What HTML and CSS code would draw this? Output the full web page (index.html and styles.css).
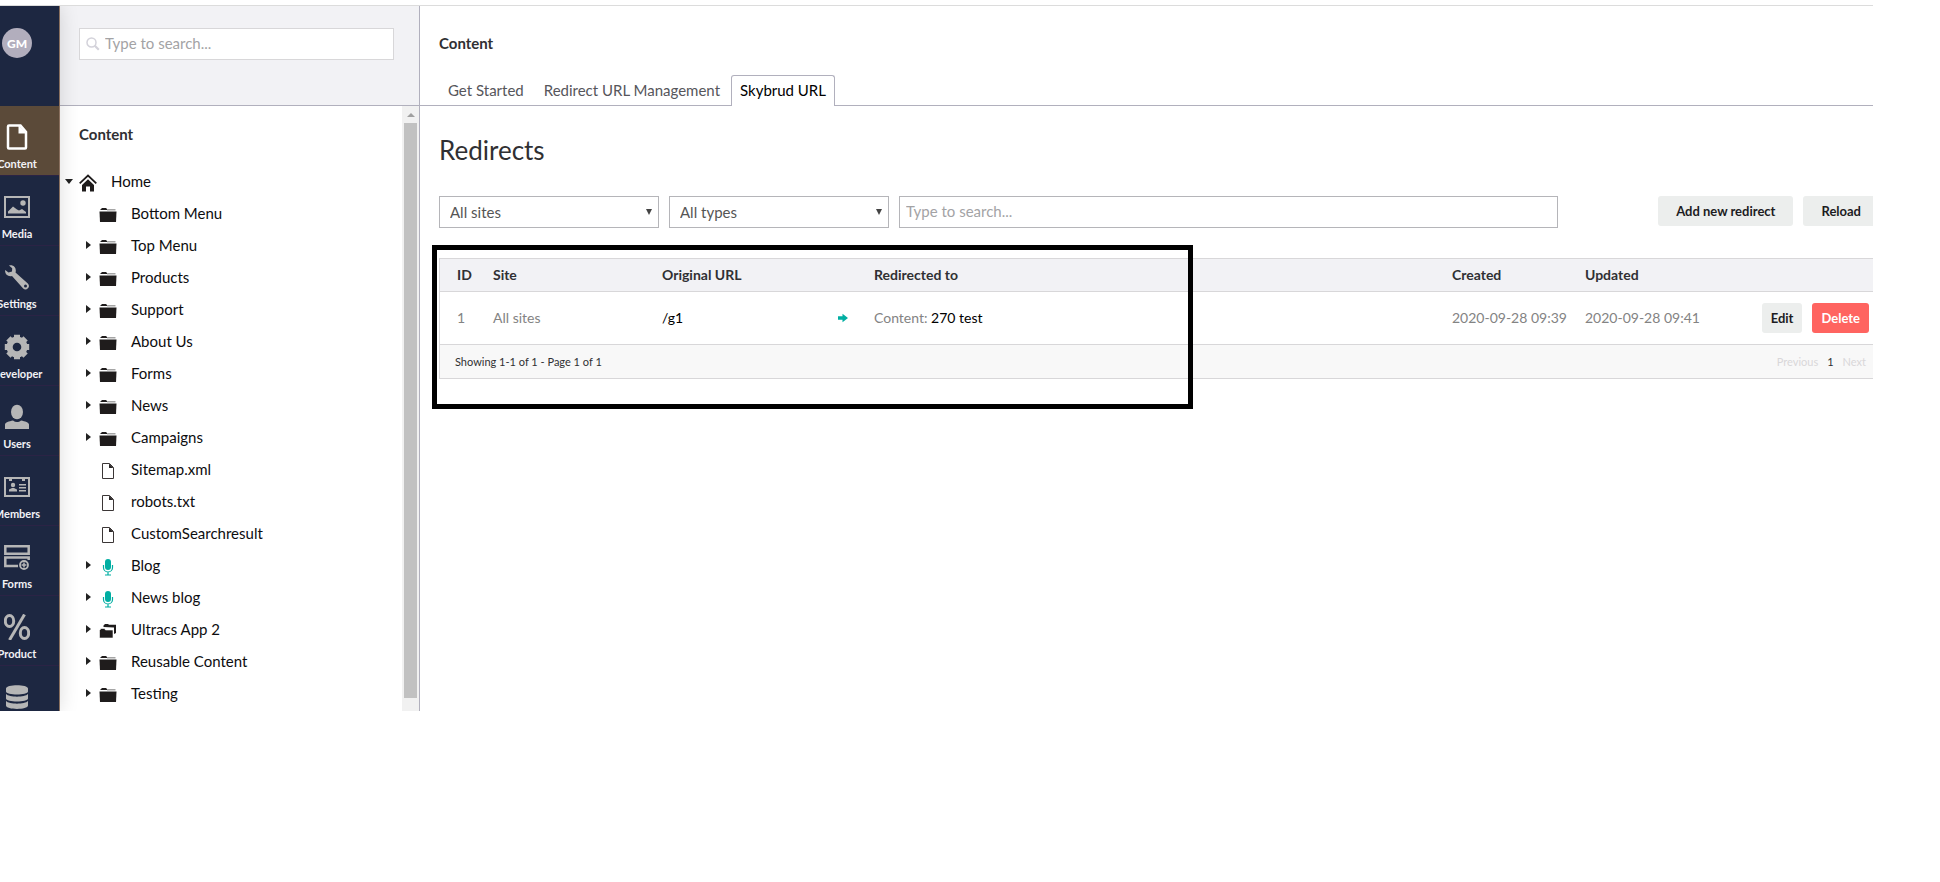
FILE: index.html
```html
<!DOCTYPE html>
<html lang="en">
  <head>
    <meta charset="UTF-8" />
    <meta name="viewport" content="width=device-width, initial-scale=1.0" />
    <title>Content - Skybrud URL</title>
    <link rel="stylesheet" href="styles.css">
  </head>
  <body>
    <!-- Icon sprite -->
    <svg class="sprite" aria-hidden="true">
      <symbol id="i-folder" viewBox="0 0 18 18">
        <path d="M1.5 4V3h1V2h5v1h1v1z" fill="#1f1c1c" />
        <path d="M8 3h8.500v1.500H8z" fill="#a5a5a5" />
        <path d="M.5 5.500h17L17 16H1z" fill="#1f1c1c" />
      </symbol>
      <symbol id="i-folders" viewBox="0 0 18 18">
        <path d="M4.500 5V3.500L6 2h3l1 .8h7V11l-2 1V5.500z" fill="#1f1c1c" />
        <path d="M.5 16V8.500L2 6.500h3.500l1 1.500H14v8z" fill="#1f1c1c" stroke="#fff" stroke-width=".6" />
      </symbol>
      <symbol id="i-doc" viewBox="0 0 18 18">
        <path d="M3.500 1.500h7l4 4v11h-11z" fill="#fff" stroke="#3b3636" />
        <path d="M10 1.500l4.500 4.500H10z" fill="#2a2626" />
      </symbol>
      <symbol id="i-mic" viewBox="0 0 18 18">
        <rect x="6" y="1" width="6" height="11" rx="3" fill="#00aea2" />
        <path d="M4.500 7v2.500a4.500 4.500 0 0 0 9 0V7M9 14v3M6 17h6" fill="none" stroke="#00aea2" stroke-width="1.200" />
      </symbol>
      <symbol id="i-home" viewBox="0 0 18 18">
        <path d="M.7 9.300L9 1.500l8.300 7.800" fill="none" stroke="#1f1c1c" stroke-width="1.800" />
        <path d="M3 11l6-5.800 6 5.800v6.500h-4V12.500H7v5H3z" fill="#1f1c1c" />
      </symbol>
    </svg>

    <div class="app">
      <!-- Sections -->
      <nav class="rail">
        <div class="rail-inner">
          <div class="user"><button class="avatar" type="button">GM</button></div>
          <a class="section active" href="#">
            <svg viewBox="0 0 26 26"><path d="M5 1.500h11.500L22 8v15.500a1 1 0 0 1-1 1H5a1 1 0 0 1-1-1v-21a1 1 0 0 1 1-1z" fill="none" stroke="currentColor" stroke-width="2.500" /><path d="M14.500 1v8.500H23z" fill="currentColor" /></svg>
            <span>Content</span>
          </a>
          <a class="section" href="#">
            <svg viewBox="0 0 26 26"><rect x="1" y="3" width="24" height="20" fill="none" stroke="currentColor" stroke-width="2" /><circle cx="19" cy="9" r="2.700" fill="currentColor" /><path d="M4 19.500v-2l5-5 4 3 2 1 3-1.500 4 3v1.500z" fill="currentColor" /></svg>
            <span>Media</span>
          </a>
          <a class="section" href="#">
            <svg viewBox="0 0 26 26"><path d="M5 1.500c4-1.500 8 2 6.500 7L23.800 19.500a3.400 3.400 0 0 1-4.600 5L8 12C4 13 .5 10 1.200 6l3.300 2.500L8 7.500l.2-3.300z" fill="currentColor" /><circle cx="21.500" cy="22" r="1.500" fill="#1d2741" /></svg>
            <span>Settings</span>
          </a>
          <a class="section" href="#">
            <svg viewBox="0 0 26 26"><circle cx="13" cy="13" r="7.500" fill="none" stroke="currentColor" stroke-width="6" /><path d="M13 .8v24.400M.8 13h24.400M4.400 4.400l17.200 17.200M21.600 4.400L4.400 21.600" fill="none" stroke="currentColor" stroke-width="6" stroke-linecap="butt" /><circle cx="13" cy="13" r="4.300" fill="#1d2741" /></svg>
            <span>Developer</span>
          </a>
          <a class="section" href="#">
            <svg viewBox="0 0 26 26"><ellipse cx="13" cy="8" rx="6" ry="7.300" fill="currentColor" /><path d="M1 25v-4.500c0-2 4-3.200 8-4 2.500 2 5.500 2 8 0 4 .8 8 2 8 4V25z" fill="currentColor" /></svg>
            <span>Users</span>
          </a>
          <a class="section" href="#">
            <svg viewBox="0 0 26 26"><path d="M1 4h24v18H1z" fill="none" stroke="currentColor" stroke-width="2" /><path d="M5 3h3v4H5zM18 3h3v4h-3z" fill="currentColor" /><circle cx="9" cy="11" r="2.200" fill="currentColor" /><path d="M5 17.500v-2l3-1.500h2l3 1.500v2zM15 10h7v1.500h-7zM15 13h7v1.500h-7zM15 16h7v1.500h-7z" fill="currentColor" /></svg>
            <span>Members</span>
          </a>
          <a class="section" href="#">
            <svg viewBox="0 0 26 26"><path d="M1.300 2.300h23.400v7.400H1.300zM14 22H1.300v-8.500h23.400V16" fill="none" stroke="currentColor" stroke-width="2.500" /><circle cx="20" cy="21" r="4" fill="none" stroke="currentColor" stroke-width="1.800" /><path d="M20 18.500v5M17.500 21h5" stroke="currentColor" stroke-width="1.500" /></svg>
            <span>Forms</span>
          </a>
          <a class="section" href="#">
            <svg viewBox="0 0 26 26"><path d="M20.500 .5L5.500 26" stroke="currentColor" stroke-width="3" /><ellipse cx="5.500" cy="7" rx="4.200" ry="5.500" fill="none" stroke="currentColor" stroke-width="3" /><ellipse cx="20.500" cy="19" rx="4.200" ry="5.500" fill="none" stroke="currentColor" stroke-width="3" /></svg>
            <span>Product</span>
          </a>
          <a class="section" href="#">
            <svg viewBox="0 0 26 26"><path d="M2 4.500C2 0 24 0 24 4.500v3c0 4-22 4-22 0zM2 10c3 3.500 19 3.500 22 0v4.500c0 4-22 4-22 0zM2 17c3 3.500 19 3.500 22 0v4.500c0 4.500-22 4.500-22 0z" fill="currentColor" /></svg>
          </a>
        </div>
      </nav>

      <!-- Content tree -->
      <aside class="tree-panel">
        <div class="tree-header">
          <div class="search">
            <svg viewBox="0 0 14 14"><circle cx="5.500" cy="5.500" r="4.500" fill="none" stroke="#d3d2da" stroke-width="1.500" /><path d="M8.800 8.800l4 4" stroke="#d3d2da" stroke-width="2.200" /></svg>
            <input type="text" aria-label="Search content" placeholder="Type to search..." />
          </div>
        </div>
        <div class="tree-body">
          <div class="tree-scroll">
            <h2 class="tree-title">Content</h2>
            <ul class="tree">
              <li class="root"><i class="caret down"></i><svg class="icon"><use href="#i-home" /></svg><a href="#">Home</a></li>
              <li><i class="caret none"></i><svg class="icon"><use href="#i-folder" /></svg><a href="#">Bottom Menu</a></li>
              <li><i class="caret"></i><svg class="icon"><use href="#i-folder" /></svg><a href="#">Top Menu</a></li>
              <li><i class="caret"></i><svg class="icon"><use href="#i-folder" /></svg><a href="#">Products</a></li>
              <li><i class="caret"></i><svg class="icon"><use href="#i-folder" /></svg><a href="#">Support</a></li>
              <li><i class="caret"></i><svg class="icon"><use href="#i-folder" /></svg><a href="#">About Us</a></li>
              <li><i class="caret"></i><svg class="icon"><use href="#i-folder" /></svg><a href="#">Forms</a></li>
              <li><i class="caret"></i><svg class="icon"><use href="#i-folder" /></svg><a href="#">News</a></li>
              <li><i class="caret"></i><svg class="icon"><use href="#i-folder" /></svg><a href="#">Campaigns</a></li>
              <li><i class="caret none"></i><svg class="icon"><use href="#i-doc" /></svg><a href="#">Sitemap.xml</a></li>
              <li><i class="caret none"></i><svg class="icon"><use href="#i-doc" /></svg><a href="#">robots.txt</a></li>
              <li><i class="caret none"></i><svg class="icon"><use href="#i-doc" /></svg><a href="#">CustomSearchresult</a></li>
              <li><i class="caret"></i><svg class="icon"><use href="#i-mic" /></svg><a href="#">Blog</a></li>
              <li><i class="caret"></i><svg class="icon"><use href="#i-mic" /></svg><a href="#">News blog</a></li>
              <li><i class="caret"></i><svg class="icon"><use href="#i-folders" /></svg><a href="#">Ultracs App 2</a></li>
              <li><i class="caret"></i><svg class="icon"><use href="#i-folder" /></svg><a href="#">Reusable Content</a></li>
              <li><i class="caret"></i><svg class="icon"><use href="#i-folder" /></svg><a href="#">Testing</a></li>
            </ul>
          </div>
          <div class="scrollbar">
            <div class="scroll-up"></div>
            <div class="scroll-thumb"></div>
          </div>
        </div>
      </aside>

      <!-- Dashboard -->
      <main class="main">
        <header class="main-header">
          <h1 class="main-title">Content</h1>
          <nav class="tabs">
            <a class="tab" href="#">Get Started</a>
            <a class="tab" href="#">Redirect URL Management</a>
            <a class="tab active" href="#">Skybrud URL</a>
          </nav>
        </header>
        <div class="dashboard">
          <h2 class="heading">Redirects</h2>
          <div class="toolbar">
            <select class="field" aria-label="Site"><option>All sites</option></select>
            <select class="field" aria-label="Type"><option>All types</option></select>
            <input class="field query" type="text" aria-label="Search redirects" placeholder="Type to search..." />
            <div class="actions">
              <button class="btn wide" type="button">Add new redirect</button>
              <button class="btn wide" type="button">Reload</button>
            </div>
          </div>

          <div class="redirects">
            <table class="table">
              <thead>
                <tr>
                  <th class="col-id">ID</th>
                  <th class="col-site">Site</th>
                  <th class="col-url">Original URL</th>
                  <th class="col-arrow"></th>
                  <th>Redirected to</th>
                  <th class="col-created">Created</th>
                  <th class="col-updated">Updated</th>
                  <th class="col-actions"></th>
                </tr>
              </thead>
              <tbody>
                <tr>
                  <td>1</td>
                  <td>All sites</td>
                  <td><a href="#">/g1</a></td>
                  <td><svg class="arrow" viewBox="0 0 10 10"><path d="M0 3.200h4.500V.8L10 5 4.500 9.200V6.800H0z" fill="#00aea2" /></svg></td>
                  <td>Content: <a href="#">270 test</a></td>
                  <td>2020-09-28 09:39</td>
                  <td>2020-09-28 09:41</td>
                  <td>
                    <div class="row-actions">
                      <button class="btn" type="button">Edit</button>
                      <button class="btn danger" type="button">Delete</button>
                    </div>
                  </td>
                </tr>
              </tbody>
            </table>
            <div class="table-footer">
              <span>Showing 1-1 of 1 - Page 1 of 1</span>
              <div class="pager">
                <button type="button" disabled>Previous</button>
                <a href="#">1</a>
                <button type="button" disabled>Next</button>
              </div>
            </div>
            <div class="highlight"></div>
          </div>
        </div>
      </main>
    </div>
  </body>
</html>
```
FILE: styles.css
```css
* {
  padding: 0;
  margin: 0;
  box-sizing: border-box;
  font-family: Lato, sans-serif;
}
body {
  display: flex;
  height: 100vh;
  padding: 5px 67px 171px 0;
  background: #fff;
  color: #303033;
  font-size: 15px;
  line-height: 20px;
}
a {
  color: inherit;
  text-decoration: none;
}
button {
  border: 0;
  cursor: pointer;
}
.sprite {
  position: absolute;
  width: 0;
  height: 0;
}
.app {
  flex: 1;
  display: flex;
  min-width: 0;
  border-top: 1px solid #dcdcdc;
  overflow: hidden;
}

/* Section rail, partly scrolled off to the left */
.rail {
  position: relative;
  z-index: 1;
  flex: none;
  width: 60px;
  background: #1d2741;
  border-right: 1px solid #8a705f;
  box-shadow: 0 0 20px rgba(0, 0, 0, 0.14);
  clip-path: inset(0 -30px 0 0);
}
.rail-inner {
  width: 84px;
  height: 100%;
  margin-left: -25px;
  overflow: hidden;
}
.user {
  height: 100px;
  padding-top: 22px;
  text-align: center;
}
.avatar {
  width: 30px;
  height: 30px;
  border-radius: 50%;
  background: #b2aebd;
  color: #fff;
  font-size: 12px;
  font-weight: 900;
}
.section {
  display: flex;
  flex-direction: column;
  align-items: center;
  gap: 6px;
  height: 70px;
  padding-top: 18px;
  border-bottom: 1px solid #2b2345;
  color: #b6b6b6;
  font-size: 11px;
  font-weight: 700;
  line-height: 16px;
}
.section svg {
  width: 26px;
  height: 26px;
}
.section span {
  color: #f2f2f5;
}
.section.active {
  background: #5b4a39;
  color: #fff;
}

/* Tree */
.tree-panel {
  flex: none;
  display: flex;
  flex-direction: column;
  width: 360px;
  border-right: 1px solid #b1b0bd;
}
.tree-header {
  flex: none;
  height: 100px;
  padding: 22px 25px 0 19px;
  background: #f2f2f5;
  border-bottom: 1px solid #b1b0bd;
}
.search {
  display: flex;
  align-items: center;
  gap: 5px;
  height: 32px;
  padding: 0 6px;
  background: #fff;
  border: 1px solid #d8d7d9;
}
.search svg {
  flex: none;
  width: 14px;
  height: 14px;
}
.search input {
  flex: 1;
  min-width: 0;
  padding-bottom: 2px;
  border: 0;
  outline: 0;
  font-size: 15px;
}
::placeholder {
  color: #a3a3a5;
}
.tree-body {
  flex: 1;
  display: flex;
  min-height: 0;
}
.tree-scroll {
  flex: 1;
  overflow: hidden;
}
.tree-title {
  padding: 18px 19px 21px;
  font-size: 15px;
  font-weight: 700;
}
.tree {
  list-style: none;
  color: #0d0d0f;
}
.tree li {
  display: flex;
  align-items: center;
  height: 32px;
  padding-left: 22px;
}
.tree li.root {
  padding-left: 2px;
}
.caret {
  width: 14px;
  margin-right: 3px;
}
.caret::before {
  content: "";
  display: block;
  width: 0;
  margin: 0 4px;
  border: 4px solid transparent;
  border-left: 5px solid #222;
  border-right: 0;
}
.caret.down::before {
  margin: 0 3px;
  border: 4px solid transparent;
  border-top: 5px solid #222;
  border-bottom: 0;
}
.caret.none::before {
  visibility: hidden;
}
.icon {
  width: 18px;
  height: 18px;
  margin: 4px 14px 0 0;
}
.scrollbar {
  width: 17px;
  padding: 0 2px 13px;
  background: #f1f1f1;
  display: flex;
  flex-direction: column;
}
.scroll-up {
  height: 17px;
  padding: 7px 0 0 3px;
}
.scroll-up::before {
  content: "";
  display: block;
  width: 0;
  border: 4px solid transparent;
  border-bottom-color: #a0a0a0;
  border-top: 0;
}
.scroll-thumb {
  flex: 1;
  background: #c1c1c1;
}

/* Main column */
.main {
  flex: 1;
  min-width: 0;
  overflow: hidden;
}
.main-header {
  display: flex;
  flex-direction: column;
  justify-content: space-between;
  height: 100px;
  padding: 27px 19px 0;
  border-bottom: 1px solid #b1b0bd;
}
.main-title {
  font-size: 15px;
  font-weight: 700;
}
.tabs {
  display: flex;
  gap: 2px;
  margin-bottom: -1px;
}
.tab {
  padding: 4px 8px 6px;
  border: 1px solid transparent;
  border-bottom: 0;
  border-radius: 3px 3px 0 0;
  color: #56565b;
}
.tab.active {
  background: #fff;
  border-color: #b1b0bd;
  color: #000;
}
.dashboard {
  margin-right: -6px;
  padding: 27px 0 0 19px;
}
.heading {
  margin-bottom: 29px;
  font-size: 26px;
  font-weight: 400;
  line-height: 34px;
}
.toolbar {
  display: flex;
  align-items: flex-start;
  gap: 10px;
}
.field {
  width: 220px;
  height: 32px;
  padding: 0 10px;
  background: #fff;
  border: 1px solid #b5b5b9;
  border-radius: 0;
  color: #555;
  font-size: 15px;
}
select.field {
  appearance: none;
  background-image: url("data:image/svg+xml,%3Csvg xmlns='http://www.w3.org/2000/svg' width='6' height='6'%3E%3Cpath d='M0 0h6L3 6z' fill='%23444'/%3E%3C/svg%3E");
  background-repeat: no-repeat;
  background-position: right 6px center;
}
.query {
  flex: 1;
  padding: 0 6px 2px;
}
.actions {
  display: flex;
  gap: 10px;
  margin-left: 90px;
}
.btn {
  height: 30px;
  padding: 0 9px;
  border-radius: 3px;
  background: #eceeed;
  color: #1c1c22;
  font-size: 13px;
  font-weight: 700;
}
.btn.wide {
  padding: 0 18px;
}
.btn.danger {
  background: #ff6460;
  color: #fff;
}

/* Redirects table */
.redirects {
  position: relative;
  margin-top: 30px;
  border: 1px solid #d8d7d9;
}
.table {
  width: 100%;
  table-layout: fixed;
  border-collapse: separate;
  border-spacing: 0;
}
.table th,
.table td {
  padding: 0 0 1px 17px;
  border-bottom: 1px solid #d8d7d9;
  text-align: left;
  font-size: 14px;
}
.table th {
  height: 33px;
  background: #f2f2f5;
  font-weight: 700;
}
.table td {
  height: 53px;
  color: #838383;
}
.table td a {
  color: #000;
}
.col-id {
  width: 36px;
}
.col-site {
  width: 169px;
}
.col-url {
  width: 176px;
}
.col-arrow {
  width: 36px;
}
.col-created {
  width: 133px;
}
.col-updated {
  width: 160px;
}
.col-actions {
  width: 150px;
}
.arrow {
  display: block;
  width: 10px;
  height: 10px;
}
.row-actions {
  display: flex;
  justify-content: flex-end;
  gap: 10px;
  padding-right: 9px;
}
.table-footer {
  display: flex;
  align-items: center;
  justify-content: space-between;
  height: 33px;
  padding: 0 12px 0 15px;
  background: #f8f8f8;
  font-size: 11px;
}
.pager {
  display: flex;
  align-items: center;
  gap: 9px;
}
.pager button {
  background: none;
  color: #d8d7d9;
  font-size: 11px;
}
/* Marker drawn over the part of the table to look at */
.highlight {
  position: absolute;
  top: -14px;
  left: -8px;
  width: 761px;
  height: 164px;
  border: 5px solid #000;
  pointer-events: none;
}
```
